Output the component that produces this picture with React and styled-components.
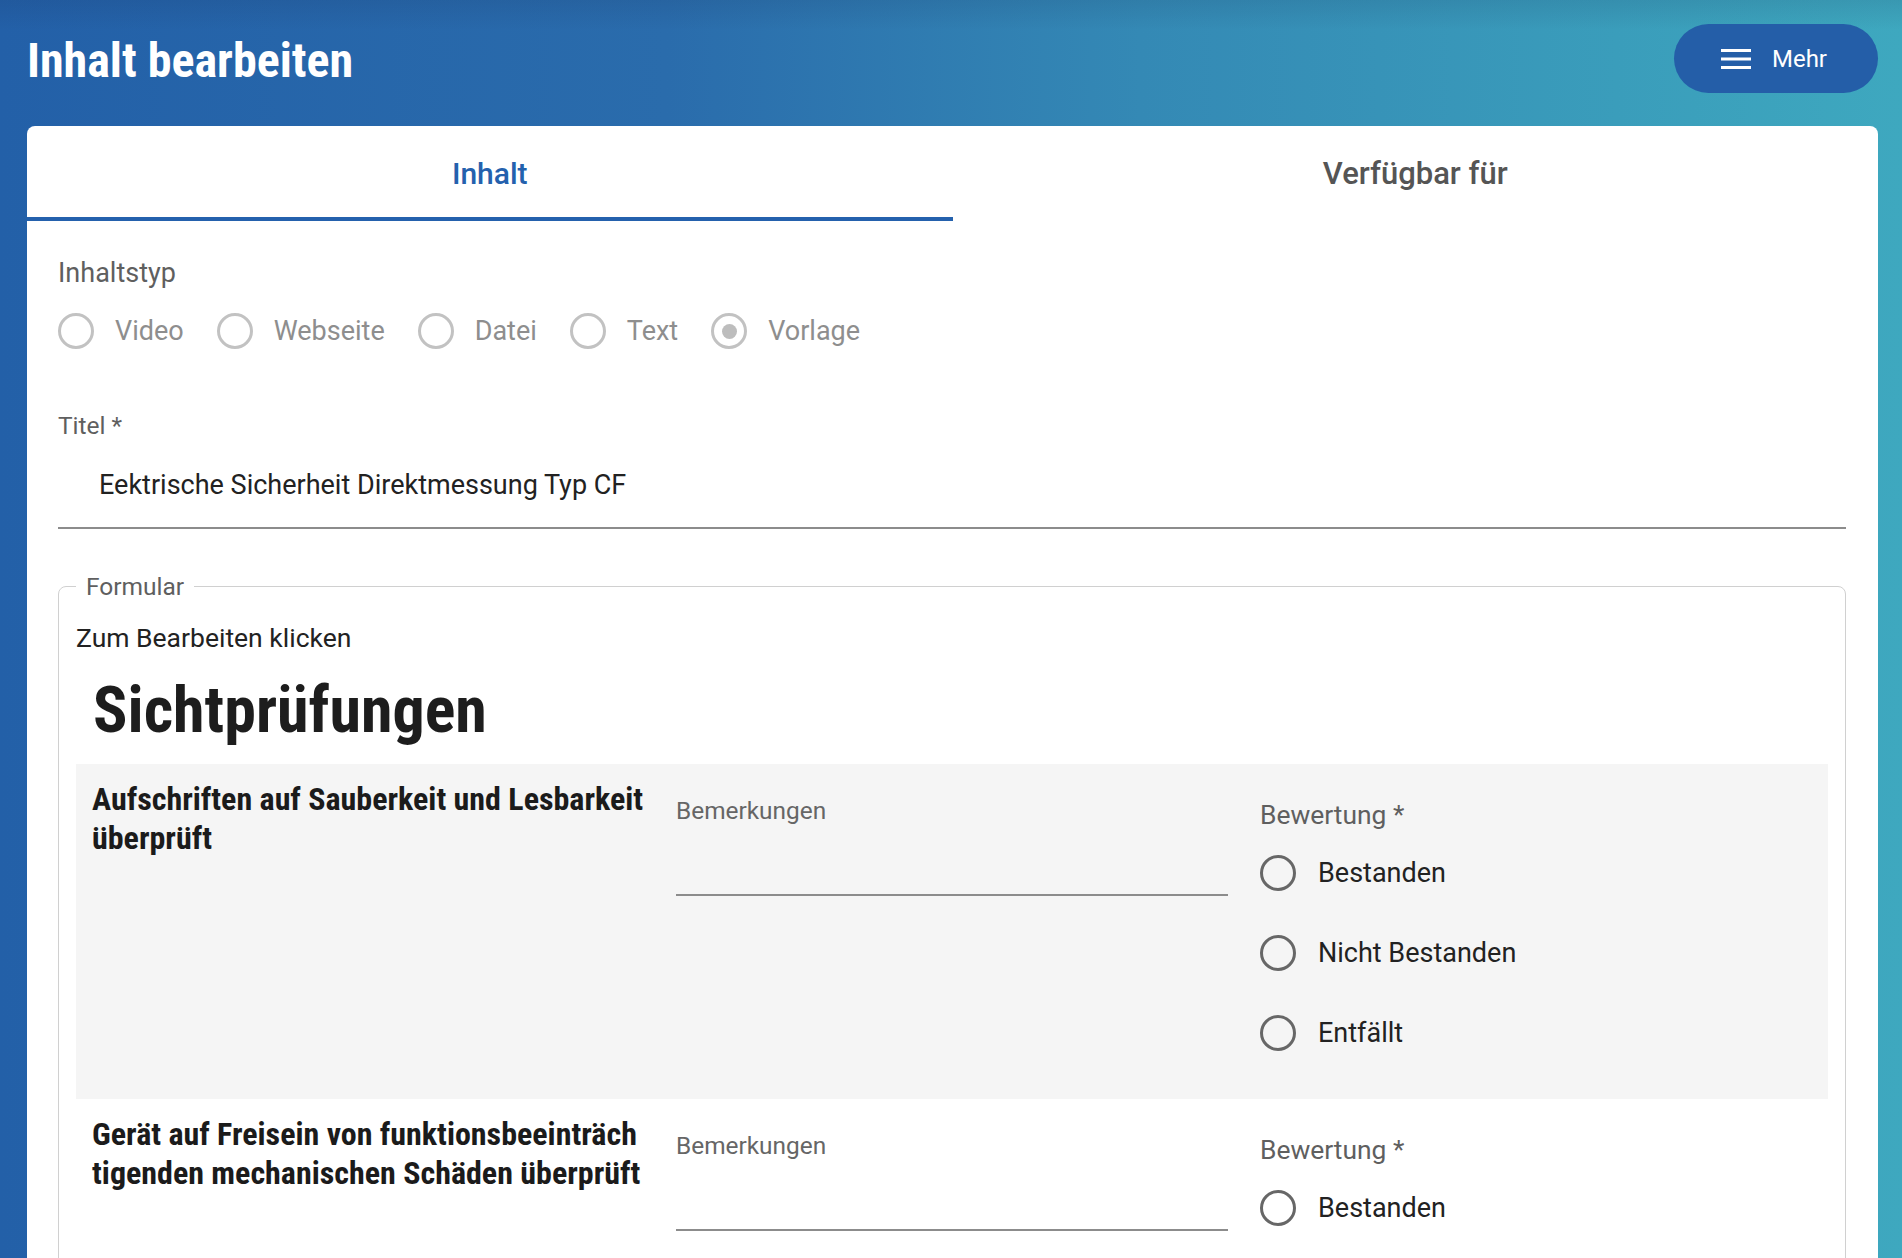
import React from "react";
import styled, { createGlobalStyle } from "styled-components";

const GlobalStyle = createGlobalStyle`
  html, body { margin: 0; padding: 0; }
  body {
    font-family: Roboto, "Noto Sans", "Liberation Sans", sans-serif;
    background: #2f7ab2;
    overflow: hidden;
  }
  * { box-sizing: border-box; }
`;

const condensed = `"Roboto Condensed", "Liberation Sans Narrow", "DejaVu Sans Condensed", Roboto, sans-serif`;

const Page = styled.div`
  min-height: 100vh;
  padding: 0 24px 0 27px;
  background:
    linear-gradient(180deg, rgba(20, 40, 80, 0.12) 0px, rgba(20, 40, 80, 0) 30px),
    linear-gradient(90deg, #2360a8 0%, #2a6cac 35%, #3489b5 60%, #3a9dbb 85%, #3ea8bf 100%);
`;

const Header = styled.header`
  height: 117px;
  display: flex;
  align-items: center;
  justify-content: space-between;
`;

const PageTitle = styled.h1`
  margin: 0;
  font-family: ${condensed};
  font-stretch: 85%;
  font-weight: 700;
  font-size: 48px;
  color: #fff;
  padding-top: 3px;
`;

const MoreButton = styled.button`
  height: 69px;
  padding: 0 51px 0 47px;
  display: flex;
  align-items: center;
  gap: 21px;
  border: none;
  border-radius: 35px;
  background: #245ea8;
  color: #fff;
  font-family: Roboto, sans-serif;
  font-size: 24px;
  cursor: pointer;
`;

const Card = styled.section`
  margin-top: 9px;
  background: #fff;
  border-radius: 8px 8px 0 0;
  min-height: 1300px;
`;

const TabBar = styled.div`
  display: grid;
  grid-template-columns: 1fr 1fr;
`;

const Tab = styled.div`
  height: 95px;
  padding-top: 3px;
  display: flex;
  align-items: center;
  justify-content: center;
  font-size: ${(p) => (p.$active ? "30px" : "31px")};
  font-weight: 500;
  color: ${(p) => (p.$active ? "#2461ad" : "#555")};
  border-bottom: 4px solid ${(p) => (p.$active ? "#2461ad" : "transparent")};
`;

const Body = styled.div`
  padding: 0 32px 0 31px;
`;

const SectionLabel = styled.div`
  margin-top: 36px;
  font-size: 27px;
  line-height: 32px;
  color: #5f5f5f;
`;

const RadioRow = styled.div`
  margin-top: 24px;
  display: flex;
  align-items: center;
  gap: 33px;
`;

const Option = styled.label`
  display: flex;
  align-items: center;
  gap: ${(p) => (p.$tall ? "22px" : "21px")};
  font-size: 27px;
  height: ${(p) => (p.$tall ? "80px" : "36px")};
  color: ${(p) => (p.$disabled ? "#8e8e8e" : "#222")};
`;

const Circle = styled.span`
  width: 36px;
  height: 36px;
  flex: none;
  border-radius: 50%;
  border: 3px solid ${(p) => (p.$disabled ? "#c2c2c2" : "#676767")};
  display: grid;
  place-items: center;
  &::after {
    content: "";
    width: 15px;
    height: 15px;
    border-radius: 50%;
    background: ${(p) => (p.$checked ? "#bdbdbd" : "transparent")};
  }
`;

const FieldLabel = styled.div`
  margin-top: 62px;
  font-size: 24.5px;
  line-height: 29px;
  color: #5f5f5f;
`;

const FieldValue = styled.div`
  padding: 29px 0 26px 41px;
  font-size: 27px;
  line-height: 32px;
  color: #222;
  border-bottom: 2px solid #8c8c8c;
`;

const Fieldset = styled.fieldset`
  margin: 43px 0 0;
  padding: 0 17px 40px 17px;
  border: 1.5px solid #d0d0d0;
  border-radius: 8px;
`;

const Legend = styled.legend`
  padding: 0 10px;
  font-size: 24.5px;
  line-height: 29px;
  color: #5f5f5f;
`;

const Hint = styled.div`
  margin-top: 21px;
  font-size: 26.5px;
  line-height: 31px;
  color: #222;
`;

const Heading = styled.h2`
  margin: 19px 0 14px 17px;
  font-family: ${condensed};
  font-stretch: 85%;
  font-weight: 700;
  font-size: 64px;
  line-height: 78px;
  color: #1d1d1d;
`;

const Item = styled.div`
  display: grid;
  grid-template-columns: repeat(3, 1fr);
  column-gap: 32px;
  padding: 16px 16px 26px;
  background: ${(p) => (p.$shaded ? "#f5f5f5" : "transparent")};
`;

const ItemTitle = styled.div`
  font-family: ${condensed};
  font-stretch: 85%;
  font-weight: 700;
  font-size: 32px;
  line-height: 39px;
  color: #1b1b1b;
  span {
    display: block;
    white-space: nowrap;
  }
`;

const RemarkCol = styled.div`
  padding-top: 16px;
`;

const SmallLabel = styled.div`
  font-size: 24.4px;
  line-height: 30px;
  color: #666;
`;

const RemarkInput = styled.div`
  height: 70px;
  border-bottom: 2px solid #8c8c8c;
`;

const RatingCol = styled.div`
  padding-top: 19px;
`;

const RatingLabel = styled.div`
  font-size: 26.4px;
  line-height: 32px;
  color: #5f5f5f;
`;

const RatingGroup = styled.div`
  margin-top: 2px;
  display: flex;
  flex-direction: column;
`;

function MenuIcon() {
  return (
    <svg width="30" height="20" viewBox="0 0 30 20">
      <rect x="0" y="0" width="30" height="3" fill="#fff" />
      <rect x="0" y="8.5" width="30" height="3" fill="#fff" />
      <rect x="0" y="17" width="30" height="3" fill="#fff" />
    </svg>
  );
}

const types = ["Video", "Webseite", "Datei", "Text", "Vorlage"];
const ratings = ["Bestanden", "Nicht Bestanden", "Entfällt"];

const items = [
  { lines: ["Aufschriften auf Sauberkeit und Lesbarkeit", "überprüft"], shaded: true },
  { lines: ["Gerät auf Freisein von funktionsbeeinträch", "tigenden mechanischen Schäden überprüft"] },
];

export default function App() {
  return (
    <>
      <GlobalStyle />
      <Page>
        <Header>
          <PageTitle>Inhalt bearbeiten</PageTitle>
          <MoreButton>
            <MenuIcon />
            Mehr
          </MoreButton>
        </Header>
        <Card>
          <TabBar>
            <Tab $active>Inhalt</Tab>
            <Tab>Verfügbar für</Tab>
          </TabBar>
          <Body>
            <SectionLabel>Inhaltstyp</SectionLabel>
            <RadioRow>
              {types.map((t) => (
                <Option key={t} $disabled>
                  <Circle $disabled $checked={t === "Vorlage"} />
                  {t}
                </Option>
              ))}
            </RadioRow>
            <FieldLabel>Titel *</FieldLabel>
            <FieldValue>Eektrische Sicherheit Direktmessung Typ CF</FieldValue>
            <Fieldset>
              <Legend>Formular</Legend>
              <Hint>Zum Bearbeiten klicken</Hint>
              <Heading>Sichtprüfungen</Heading>
              {items.map((it, i) => (
                <Item key={i} $shaded={it.shaded}>
                  <ItemTitle>
                    {it.lines.map((l) => (
                      <span key={l}>{l}</span>
                    ))}
                  </ItemTitle>
                  <RemarkCol>
                    <SmallLabel>Bemerkungen</SmallLabel>
                    <RemarkInput />
                  </RemarkCol>
                  <RatingCol>
                    <RatingLabel>Bewertung *</RatingLabel>
                    <RatingGroup>
                      {ratings.map((r) => (
                        <Option key={r} $tall>
                          <Circle />
                          {r}
                        </Option>
                      ))}
                    </RatingGroup>
                  </RatingCol>
                </Item>
              ))}
            </Fieldset>
          </Body>
        </Card>
      </Page>
    </>
  );
}
